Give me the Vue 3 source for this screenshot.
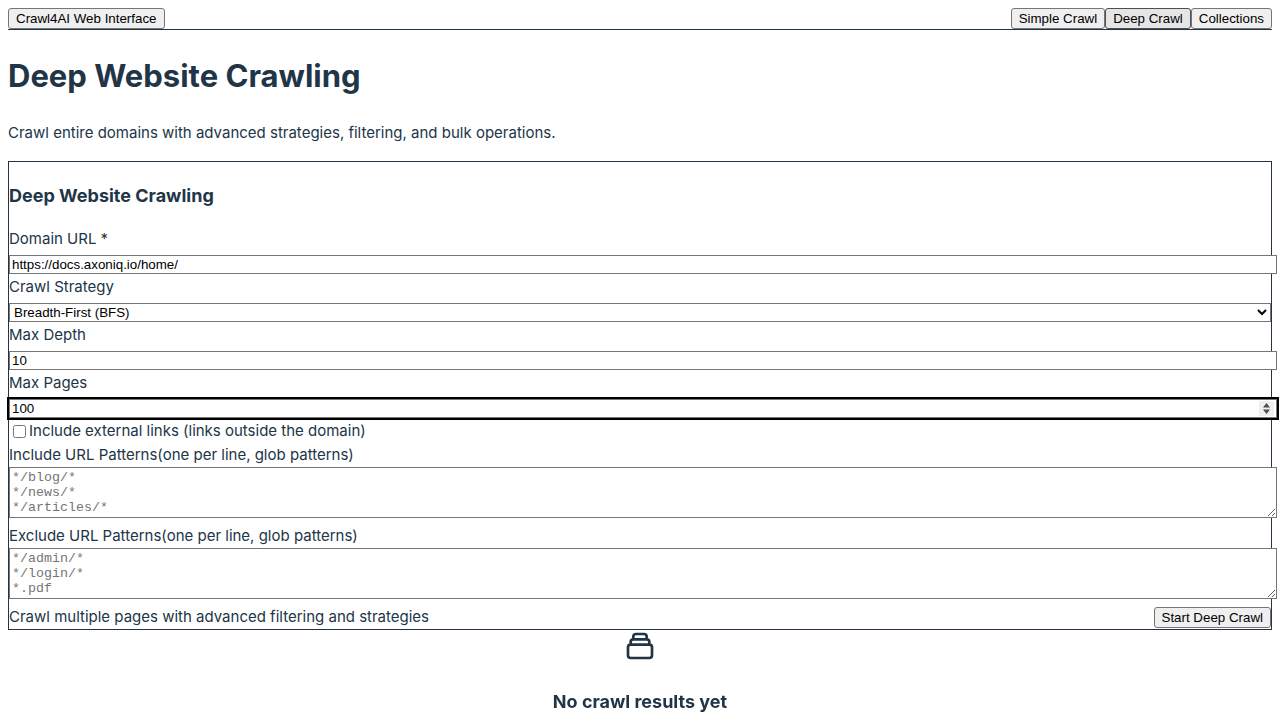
<script setup>
import { ref, onMounted } from 'vue'

const domain = ref('https://docs.axoniq.io/home/')
const strategy = ref('bfs')
const depth = ref(10)
const pages = ref(100)
const external = ref(false)
const include = ref('')
const exclude = ref('')
const pagesInput = ref(null)

onMounted(() => pagesInput.value.focus())
</script>

<template>
  <div class="page">
    <header class="bar">
      <button type="button">Crawl4AI Web Interface</button>
      <nav class="tabs">
        <button type="button">Simple Crawl</button>
        <button type="button" class="active">Deep Crawl</button>
        <button type="button">Collections</button>
      </nav>
    </header>
    <main>
      <h1>Deep Website Crawling</h1>
      <p class="intro">Crawl entire domains with advanced strategies, filtering, and bulk operations.</p>
      <form class="panel" @submit.prevent>
        <h3>Deep Website Crawling</h3>
        <div class="field">
          <label for="domain">Domain URL *</label>
          <input id="domain" v-model="domain" type="url" />
        </div>
        <div class="field">
          <label for="strategy">Crawl Strategy</label>
          <select id="strategy" v-model="strategy">
            <option value="bfs">Breadth-First (BFS)</option>
            <option value="dfs">Depth-First (DFS)</option>
          </select>
        </div>
        <div class="field">
          <label for="depth">Max Depth</label>
          <input id="depth" v-model="depth" type="number" />
        </div>
        <div class="field">
          <label for="pages">Max Pages</label>
          <input id="pages" ref="pagesInput" v-model="pages" class="pages" type="number" />
        </div>
        <div class="check">
          <input id="external" v-model="external" type="checkbox" />
          <label for="external">Include external links (links outside the domain)</label>
        </div>
        <div class="area">
          <label for="include">Include URL Patterns<span>(one per line, glob patterns)</span></label>
          <textarea id="include" v-model="include" rows="3" placeholder="*/blog/*&#10;*/news/*&#10;*/articles/*"></textarea>
        </div>
        <div class="area">
          <label for="exclude">Exclude URL Patterns<span>(one per line, glob patterns)</span></label>
          <textarea id="exclude" v-model="exclude" rows="3" placeholder="*/admin/*&#10;*/login/*&#10;*.pdf"></textarea>
        </div>
        <div class="actions">
          <span>Crawl multiple pages with advanced filtering and strategies</span>
          <button type="submit">Start Deep Crawl</button>
        </div>
      </form>
      <section class="empty">
        <svg width="32" height="32" viewBox="0 0 24 24" fill="none" stroke="currentColor" stroke-width="2" stroke-linecap="round" stroke-linejoin="round" aria-hidden="true">
          <path d="M19 11H5m14 0a2 2 0 012 2v6a2 2 0 01-2 2H5a2 2 0 01-2-2v-6a2 2 0 012-2m14 0V9a2 2 0 00-2-2M5 11V9a2 2 0 012-2m0 0V5a2 2 0 012-2h6a2 2 0 012 2v2M7 7h10" />
        </svg>
        <h3>No crawl results yet</h3>
      </section>
    </main>
  </div>
</template>

<style>
html {
  scrollbar-width: none;
}
body {
  margin: 0;
}
</style>

<style scoped>
.page {
  padding: 8px;
  color: #213547;
  font-family: Inter, "Liberation Sans", sans-serif;
  font-size: 15px;
  line-height: 24px;
}
.bar {
  display: flex;
  justify-content: space-between;
  border-bottom: 1px solid #213547;
}
.tabs {
  display: flex;
}
button,
.field input,
select {
  box-sizing: content-box;
  font-family: "Liberation Sans", sans-serif;
  line-height: 15px;
}
button {
  height: 15px;
  margin: 0;
  padding: 2px 7px;
  border: 1px solid #767676;
  border-radius: 3px;
  background: #efefef;
  color: #000;
}
button.active {
  border-color: #4f4f4f;
  background: #e5e5e5;
}
h1 {
  margin: 22px 0 21px;
  font-size: 31px;
  line-height: 48px;
}
.intro {
  margin: 16px 0;
}
.panel {
  border: 1px solid #213547;
}
h3 {
  font-size: 18px;
  line-height: 28px;
}
.panel h3 {
  margin: 20px 0 17px;
}
.field label,
.area label {
  display: block;
}
.field {
  height: 48px;
}
.field input {
  display: block;
  width: 100%;
  height: 15px;
  margin: 4px 0 0;
  padding: 1px 2px;
  border: 1px solid #767676;
  background: #fff;
  color: #000;
}
select {
  display: block;
  box-sizing: border-box;
  width: 100%;
  height: 19px;
  margin: 4px 0 0;
  border: 1px solid #767676;
  border-radius: 0;
  background: #fff;
  color: #000;
}
.field .pages {
  outline: 2px solid #000;
}
.pages::-webkit-inner-spin-button {
  appearance: none;
  width: 15px;
  height: 15px;
  opacity: 1;
  background: #efefef url("data:image/svg+xml,%3Csvg xmlns='http://www.w3.org/2000/svg' viewBox='0 0 15 15'%3E%3Cpath d='M4 6.5L7.5 2L11 6.5ZM4 8.5L7.5 13L11 8.5Z' fill='%234d4d4d'/%3E%3C/svg%3E") center / 15px 15px no-repeat;
}
.check {
  display: flex;
  align-items: center;
}
.check input {
  width: 13px;
  height: 13px;
  margin: 0 3px 0 4px;
}
textarea {
  box-sizing: content-box;
  display: block;
  width: 100%;
  height: 45px;
  margin: 0 0 6px;
  padding: 2px;
  border: 1px solid #767676;
  font-family: "Liberation Mono", monospace;
  line-height: 15px;
}
.actions {
  display: flex;
  align-items: center;
  justify-content: space-between;
}
.empty {
  text-align: center;
}
.empty svg {
  display: block;
  margin: 0 auto;
}
.empty h3 {
  margin: 26px 0 18px;
}
</style>
